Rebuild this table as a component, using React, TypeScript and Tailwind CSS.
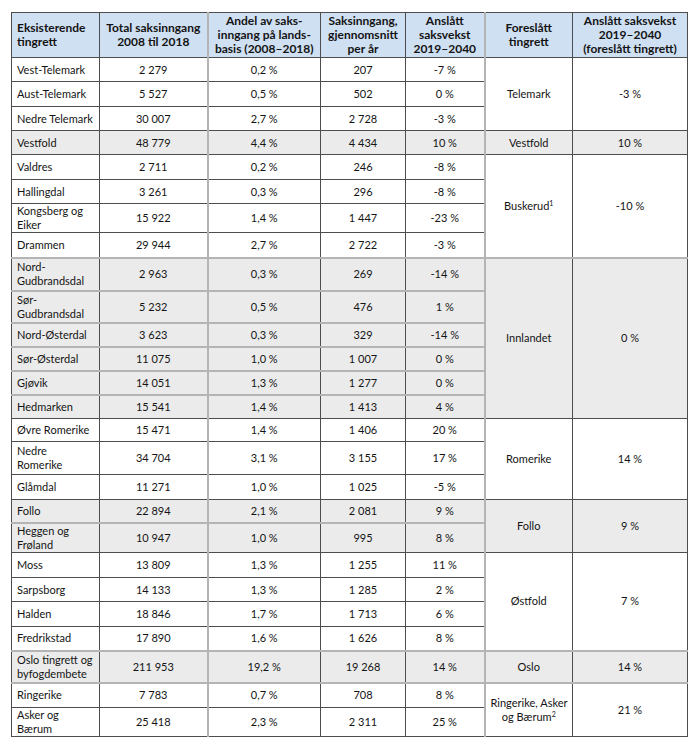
import type { ReactNode } from 'react';

type Row = {
  name: ReactNode;
  total: string;
  andel: string;
  snitt: string;
  vekst: string;
  h: string;
  grayTop?: boolean;
};

type Group = {
  name: ReactNode;
  vekst: string;
  shaded?: boolean;
  rows: Row[];
};

const groups: Group[] = [
  {
    name: 'Telemark',
    vekst: '-3 %',
    rows: [
      { name: 'Vest-Telemark', total: '2 279', andel: '0,2 %', snitt: '207', vekst: '-7 %', h: 'h-[24px]' },
      { name: 'Aust-Telemark', total: '5 527', andel: '0,5 %', snitt: '502', vekst: '0 %', h: 'h-[25px]' },
      { name: 'Nedre Telemark', total: '30 007', andel: '2,7 %', snitt: '2 728', vekst: '-3 %', h: 'h-[24px]' },
    ],
  },
  {
    name: 'Vestfold',
    vekst: '10 %',
    shaded: true,
    rows: [
      { name: 'Vestfold', total: '48 779', andel: '4,4 %', snitt: '4 434', vekst: '10 %', h: 'h-[24px]' },
    ],
  },
  {
    name: (
      <>
        Buskerud<sup className="text-[7px]">1</sup>
      </>
    ),
    vekst: '-10 %',
    rows: [
      { name: 'Valdres', total: '2 711', andel: '0,2 %', snitt: '246', vekst: '-8 %', h: 'h-[25px]' },
      { name: 'Hallingdal', total: '3 261', andel: '0,3 %', snitt: '296', vekst: '-8 %', h: 'h-[24px]' },
      { name: <>Kongsberg og<br />Eiker</>, total: '15 922', andel: '1,4 %', snitt: '1 447', vekst: '-23 %', h: 'h-[25px]' },
      { name: 'Drammen', total: '29 944', andel: '2,7 %', snitt: '2 722', vekst: '-3 %', h: 'h-[25px]' },
    ],
  },
  {
    name: 'Innlandet',
    vekst: '0 %',
    shaded: true,
    rows: [
      { name: <>Nord-<br />Gudbrandsdal</>, total: '2 963', andel: '0,3 %', snitt: '269', vekst: '-14 %', h: 'h-[33px]', grayTop: true },
      { name: <>Sør-<br />Gudbrandsdal</>, total: '5 232', andel: '0,5 %', snitt: '476', vekst: '1 %', h: 'h-[32px]', grayTop: true },
      { name: 'Nord-Østerdal', total: '3 623', andel: '0,3 %', snitt: '329', vekst: '-14 %', h: 'h-[24px]', grayTop: true },
      { name: 'Sør-Østerdal', total: '11 075', andel: '1,0 %', snitt: '1 007', vekst: '0 %', h: 'h-[24px]', grayTop: true },
      { name: 'Gjøvik', total: '14 051', andel: '1,3 %', snitt: '1 277', vekst: '0 %', h: 'h-[24px]', grayTop: true },
      { name: 'Hedmarken', total: '15 541', andel: '1,4 %', snitt: '1 413', vekst: '4 %', h: 'h-[24px]', grayTop: true },
    ],
  },
  {
    name: 'Romerike',
    vekst: '14 %',
    rows: [
      { name: 'Øvre Romerike', total: '15 471', andel: '1,4 %', snitt: '1 406', vekst: '20 %', h: 'h-[23px]' },
      { name: <>Nedre<br />Romerike</>, total: '34 704', andel: '3,1 %', snitt: '3 155', vekst: '17 %', h: 'h-[33px]' },
      { name: 'Glåmdal', total: '11 271', andel: '1,0 %', snitt: '1 025', vekst: '-5 %', h: 'h-[25px]' },
    ],
  },
  {
    name: 'Follo',
    vekst: '9 %',
    shaded: true,
    rows: [
      { name: 'Follo', total: '22 894', andel: '2,1 %', snitt: '2 081', vekst: '9 %', h: 'h-[23px]' },
      { name: <>Heggen og<br />Frøland</>, total: '10 947', andel: '1,0 %', snitt: '995', vekst: '8 %', h: 'h-[30px]', grayTop: true },
    ],
  },
  {
    name: 'Østfold',
    vekst: '7 %',
    rows: [
      { name: 'Moss', total: '13 809', andel: '1,3 %', snitt: '1 255', vekst: '11 %', h: 'h-[25px]' },
      { name: 'Sarpsborg', total: '14 133', andel: '1,3 %', snitt: '1 285', vekst: '2 %', h: 'h-[24px]' },
      { name: 'Halden', total: '18 846', andel: '1,7 %', snitt: '1 713', vekst: '6 %', h: 'h-[25px]' },
      { name: 'Fredrikstad', total: '17 890', andel: '1,6 %', snitt: '1 626', vekst: '8 %', h: 'h-[24px]' },
    ],
  },
  {
    name: 'Oslo',
    vekst: '14 %',
    shaded: true,
    rows: [
      { name: <>Oslo tingrett og<br />byfogdembete</>, total: '211 953', andel: '19,2 %', snitt: '19 268', vekst: '14 %', h: 'h-[32px]', grayTop: true },
    ],
  },
  {
    name: (
      <>
        Ringerike, Asker
        <br />
        og Bærum<sup className="text-[7px]">2</sup>
      </>
    ),
    vekst: '21 %',
    rows: [
      { name: 'Ringerike', total: '7 783', andel: '0,7 %', snitt: '708', vekst: '8 %', h: 'h-[25px]', grayTop: true },
      { name: <>Asker og<br />Bærum</>, total: '25 418', andel: '2,3 %', snitt: '2 311', vekst: '25 %', h: 'h-[29px]' },
    ],
  },
];

const cell = 'border border-[#4d4d4d] px-[5px] align-middle';
const grayRight = 'border-r-2 border-r-[#b4b4b4]';

export default function App() {
  return (
    <div className="min-h-[752px] w-[696px] bg-white pt-[12px] pl-[11px] font-['Lato',sans-serif] text-[#141414]">
      <table className="w-[676px] table-fixed border-collapse border border-[#4d4d4d] text-[11px] leading-[14px]">
        <colgroup>
          <col className="w-[88px]" />
          <col className="w-[108px]" />
          <col className="w-[113px]" />
          <col className="w-[85px]" />
          <col className="w-[79px]" />
          <col className="w-[88px]" />
          <col className="w-[115px]" />
        </colgroup>
        <thead>
          <tr className="h-[45px] bg-[#cfe0f3] text-[12px] font-bold">
            <th className={`${cell} text-left`}>
              Eksisterende
              <br />
              tingrett
            </th>
            <th className={`${cell} ${grayRight} text-center`}>
              Total saksinngang
              <br />
              2008 til 2018
            </th>
            <th className={`${cell} text-center`}>
              Andel av saks-
              <br />
              inngang på lands-
              <br />
              basis (2008–2018)
            </th>
            <th className={`${cell} text-center`}>
              Saksinngang,
              <br />
              gjennomsnitt
              <br />
              per år
            </th>
            <th className={`${cell} ${grayRight} text-center`}>
              Anslått
              <br />
              saksvekst
              <br />
              2019–2040
            </th>
            <th className={`${cell} text-center`}>
              Foreslått
              <br />
              tingrett
            </th>
            <th className={`${cell} text-center`}>
              Anslått saksvekst
              <br />
              2019–2040
              <br />
              (foreslått tingrett)
            </th>
          </tr>
        </thead>
        <tbody>
          {groups.map((g) =>
            g.rows.map((r, i) => {
              const top = r.grayTop ? 'border-t-2 border-t-[#b4b4b4]' : '';
              const bg = g.shaded ? 'bg-[#ebebeb]' : 'bg-white';
              return (
                <tr key={`${g.vekst}-${r.total}`} className={`${r.h} ${bg}`}>
                  <td className={`${cell} ${top} whitespace-nowrap text-left`}>{r.name}</td>
                  <td className={`${cell} ${top} ${grayRight} text-center`}>{r.total}</td>
                  <td className={`${cell} ${top} text-center`}>{r.andel}</td>
                  <td className={`${cell} ${top} text-center`}>{r.snitt}</td>
                  <td className={`${cell} ${top} ${grayRight} text-center`}>{r.vekst}</td>
                  {i === 0 && (
                    <>
                      <td rowSpan={g.rows.length} className={`${cell} ${top} whitespace-nowrap text-center`}>
                        {g.name}
                      </td>
                      <td rowSpan={g.rows.length} className={`${cell} ${top} text-center`}>
                        {g.vekst}
                      </td>
                    </>
                  )}
                </tr>
              );
            })
          )}
        </tbody>
      </table>
    </div>
  );
}
